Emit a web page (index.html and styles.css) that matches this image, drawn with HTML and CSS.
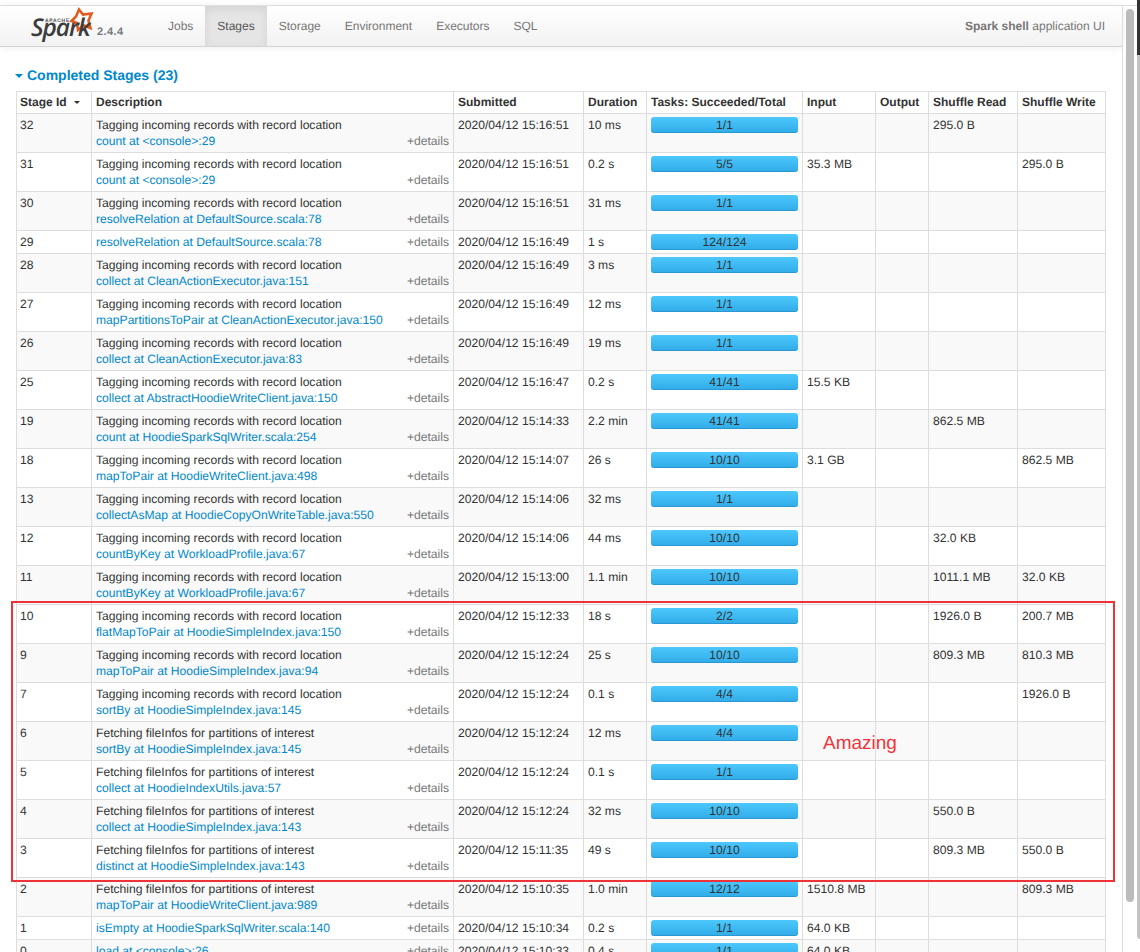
FILE: index.html
```html
<!DOCTYPE html>
<html lang="en">
<head>
<meta charset="utf-8">
<title>Spark shell - Stages</title>
<link rel="stylesheet" href="styles.css">
</head>
<body>
<div class="app">
  <div class="page">
    <nav class="navbar">
      <a class="brand" href="#">
        <svg class="logo" width="66" height="34" viewBox="0 0 66 34">
          <polygon class="logo-star" points="48,1.5 52,6.5 60.5,5.5 57.5,12.5 59.5,20 53,17.5 47,22 46,15 40.5,13 45,8.5"/>
          <text class="logo-apache" x="14" y="14">APACHE</text>
          <text class="logo-word" x="0" y="27.5">Spark</text>
        </svg>
        <span class="version">2.4.4</span>
      </a>
      <ul class="nav">
        <li><a href="#">Jobs</a></li>
        <li class="active"><a href="#">Stages</a></li>
        <li><a href="#">Storage</a></li>
        <li><a href="#">Environment</a></li>
        <li><a href="#">Executors</a></li>
        <li><a href="#">SQL</a></li>
      </ul>
      <p class="app-name"><strong>Spark shell</strong> application UI</p>
    </nav>
    <main class="content">
      <h4 class="section-title"><span class="caret"></span>Completed Stages (23)</h4>
      <table class="stages">
        <colgroup>
          <col class="c-id"><col class="c-desc"><col class="c-sub"><col class="c-dur"><col class="c-task"><col class="c-in"><col class="c-out"><col class="c-read"><col class="c-write">
        </colgroup>
        <thead>
          <tr><th>Stage Id<span class="sort"></span></th><th>Description</th><th>Submitted</th><th>Duration</th><th>Tasks: Succeeded/Total</th><th>Input</th><th>Output</th><th>Shuffle Read</th><th>Shuffle Write</th></tr>
        </thead>
        <tbody>
          <tr><td>32</td><td><div>Tagging incoming records with record location</div><div class="line"><a href="#">count at &lt;console&gt;:29</a><span class="more">+details</span></div></td><td>2020/04/12 15:16:51</td><td>10 ms</td><td><div class="bar">1/1</div></td><td></td><td></td><td>295.0 B</td><td></td></tr>
          <tr><td>31</td><td><div>Tagging incoming records with record location</div><div class="line"><a href="#">count at &lt;console&gt;:29</a><span class="more">+details</span></div></td><td>2020/04/12 15:16:51</td><td>0.2 s</td><td><div class="bar">5/5</div></td><td>35.3 MB</td><td></td><td></td><td>295.0 B</td></tr>
          <tr><td>30</td><td><div>Tagging incoming records with record location</div><div class="line"><a href="#">resolveRelation at DefaultSource.scala:78</a><span class="more">+details</span></div></td><td>2020/04/12 15:16:51</td><td>31 ms</td><td><div class="bar">1/1</div></td><td></td><td></td><td></td><td></td></tr>
          <tr><td>29</td><td><div class="line"><a href="#">resolveRelation at DefaultSource.scala:78</a><span class="more">+details</span></div></td><td>2020/04/12 15:16:49</td><td>1 s</td><td><div class="bar">124/124</div></td><td></td><td></td><td></td><td></td></tr>
          <tr><td>28</td><td><div>Tagging incoming records with record location</div><div class="line"><a href="#">collect at CleanActionExecutor.java:151</a><span class="more">+details</span></div></td><td>2020/04/12 15:16:49</td><td>3 ms</td><td><div class="bar">1/1</div></td><td></td><td></td><td></td><td></td></tr>
          <tr><td>27</td><td><div>Tagging incoming records with record location</div><div class="line"><a href="#">mapPartitionsToPair at CleanActionExecutor.java:150</a><span class="more">+details</span></div></td><td>2020/04/12 15:16:49</td><td>12 ms</td><td><div class="bar">1/1</div></td><td></td><td></td><td></td><td></td></tr>
          <tr><td>26</td><td><div>Tagging incoming records with record location</div><div class="line"><a href="#">collect at CleanActionExecutor.java:83</a><span class="more">+details</span></div></td><td>2020/04/12 15:16:49</td><td>19 ms</td><td><div class="bar">1/1</div></td><td></td><td></td><td></td><td></td></tr>
          <tr><td>25</td><td><div>Tagging incoming records with record location</div><div class="line"><a href="#">collect at AbstractHoodieWriteClient.java:150</a><span class="more">+details</span></div></td><td>2020/04/12 15:16:47</td><td>0.2 s</td><td><div class="bar">41/41</div></td><td>15.5 KB</td><td></td><td></td><td></td></tr>
          <tr><td>19</td><td><div>Tagging incoming records with record location</div><div class="line"><a href="#">count at HoodieSparkSqlWriter.scala:254</a><span class="more">+details</span></div></td><td>2020/04/12 15:14:33</td><td>2.2 min</td><td><div class="bar">41/41</div></td><td></td><td></td><td>862.5 MB</td><td></td></tr>
          <tr><td>18</td><td><div>Tagging incoming records with record location</div><div class="line"><a href="#">mapToPair at HoodieWriteClient.java:498</a><span class="more">+details</span></div></td><td>2020/04/12 15:14:07</td><td>26 s</td><td><div class="bar">10/10</div></td><td>3.1 GB</td><td></td><td></td><td>862.5 MB</td></tr>
          <tr><td>13</td><td><div>Tagging incoming records with record location</div><div class="line"><a href="#">collectAsMap at HoodieCopyOnWriteTable.java:550</a><span class="more">+details</span></div></td><td>2020/04/12 15:14:06</td><td>32 ms</td><td><div class="bar">1/1</div></td><td></td><td></td><td></td><td></td></tr>
          <tr><td>12</td><td><div>Tagging incoming records with record location</div><div class="line"><a href="#">countByKey at WorkloadProfile.java:67</a><span class="more">+details</span></div></td><td>2020/04/12 15:14:06</td><td>44 ms</td><td><div class="bar">10/10</div></td><td></td><td></td><td>32.0 KB</td><td></td></tr>
          <tr><td>11</td><td><div>Tagging incoming records with record location</div><div class="line"><a href="#">countByKey at WorkloadProfile.java:67</a><span class="more">+details</span></div></td><td>2020/04/12 15:13:00</td><td>1.1 min</td><td><div class="bar">10/10</div></td><td></td><td></td><td>1011.1 MB</td><td>32.0 KB</td></tr>
          <tr><td>10</td><td><div>Tagging incoming records with record location</div><div class="line"><a href="#">flatMapToPair at HoodieSimpleIndex.java:150</a><span class="more">+details</span></div></td><td>2020/04/12 15:12:33</td><td>18 s</td><td><div class="bar">2/2</div></td><td></td><td></td><td>1926.0 B</td><td>200.7 MB</td></tr>
          <tr><td>9</td><td><div>Tagging incoming records with record location</div><div class="line"><a href="#">mapToPair at HoodieSimpleIndex.java:94</a><span class="more">+details</span></div></td><td>2020/04/12 15:12:24</td><td>25 s</td><td><div class="bar">10/10</div></td><td></td><td></td><td>809.3 MB</td><td>810.3 MB</td></tr>
          <tr><td>7</td><td><div>Tagging incoming records with record location</div><div class="line"><a href="#">sortBy at HoodieSimpleIndex.java:145</a><span class="more">+details</span></div></td><td>2020/04/12 15:12:24</td><td>0.1 s</td><td><div class="bar">4/4</div></td><td></td><td></td><td></td><td>1926.0 B</td></tr>
          <tr><td>6</td><td><div>Fetching fileInfos for partitions of interest</div><div class="line"><a href="#">sortBy at HoodieSimpleIndex.java:145</a><span class="more">+details</span></div></td><td>2020/04/12 15:12:24</td><td>12 ms</td><td><div class="bar">4/4</div></td><td></td><td></td><td></td><td></td></tr>
          <tr><td>5</td><td><div>Fetching fileInfos for partitions of interest</div><div class="line"><a href="#">collect at HoodieIndexUtils.java:57</a><span class="more">+details</span></div></td><td>2020/04/12 15:12:24</td><td>0.1 s</td><td><div class="bar">1/1</div></td><td></td><td></td><td></td><td></td></tr>
          <tr><td>4</td><td><div>Fetching fileInfos for partitions of interest</div><div class="line"><a href="#">collect at HoodieSimpleIndex.java:143</a><span class="more">+details</span></div></td><td>2020/04/12 15:12:24</td><td>32 ms</td><td><div class="bar">10/10</div></td><td></td><td></td><td>550.0 B</td><td></td></tr>
          <tr><td>3</td><td><div>Fetching fileInfos for partitions of interest</div><div class="line"><a href="#">distinct at HoodieSimpleIndex.java:143</a><span class="more">+details</span></div></td><td>2020/04/12 15:11:35</td><td>49 s</td><td><div class="bar">10/10</div></td><td></td><td></td><td>809.3 MB</td><td>550.0 B</td></tr>
          <tr><td>2</td><td><div>Fetching fileInfos for partitions of interest</div><div class="line"><a href="#">mapToPair at HoodieWriteClient.java:989</a><span class="more">+details</span></div></td><td>2020/04/12 15:10:35</td><td>1.0 min</td><td><div class="bar">12/12</div></td><td>1510.8 MB</td><td></td><td></td><td>809.3 MB</td></tr>
          <tr><td>1</td><td><div class="line"><a href="#">isEmpty at HoodieSparkSqlWriter.scala:140</a><span class="more">+details</span></div></td><td>2020/04/12 15:10:34</td><td>0.2 s</td><td><div class="bar">1/1</div></td><td>64.0 KB</td><td></td><td></td><td></td></tr>
          <tr><td>0</td><td><div class="line"><a href="#">load at &lt;console&gt;:26</a><span class="more">+details</span></div></td><td>2020/04/12 15:10:33</td><td>0.4 s</td><td><div class="bar">1/1</div></td><td>64.0 KB</td><td></td><td></td><td></td></tr>
        </tbody>
      </table>
    </main>
  </div>
  <div class="rail"><div class="thumb"></div></div>
  <div class="edge"></div>
  <div class="highlight"></div>
  <div class="note">Amazing</div>
</div>
</body>
</html>
```
FILE: styles.css
```css
html, body {
  margin: 0;
  height: 952px;
  overflow: hidden;
  background: #fff;
}
body {
  font-family: "Liberation Sans", Arial, sans-serif;
  font-size: 12px;
  line-height: 16px;
  color: #333;
  text-rendering: geometricPrecision;
}
a { color: #0088cc; text-decoration: none; }

.app {
  position: relative;
  display: flex;
  height: 952px;
  overflow: hidden;
}
.page {
  flex: 0 0 1122px;
  min-width: 0;
  padding-top: 5px;
  box-sizing: border-box;
}

.navbar {
  display: flex;
  align-items: stretch;
  height: 42px;
  box-sizing: border-box;
  padding: 0 17px 0 31px;
  border-top: 1px solid #dedede;
  border-bottom: 1px solid #d4d4d4;
  background: linear-gradient(#ffffff, #f2f2f2);
  box-shadow: 0 1px 8px rgba(0, 0, 0, .07);
}
.brand { display: flex; align-items: flex-start; width: 125px; flex: none; }
.logo { display: block; margin-top: 2px; flex: none; overflow: visible; }
.logo-star { fill: none; stroke: #e25a1c; stroke-width: 2.6; stroke-linejoin: miter; }
.logo-apache { font: bold 5px "Liberation Sans", Arial, sans-serif; letter-spacing: .7px; fill: #555; }
.logo-word { font: italic 600 24.5px "Open Sans", sans-serif; letter-spacing: -1.1px; fill: #3d3d3d; }
.version {
  margin: 18px 0 0 0;
  font-size: 11px;
  font-weight: bold;
  letter-spacing: .4px;
  color: #737b83;
}
.nav { display: flex; margin: 0; padding: 0; list-style: none; }
.nav a {
  display: block;
  padding: 12px 12px 0;
  height: 28px;
  color: #777;
}
.nav .active a {
  color: #555;
  background: #e5e5e5;
  box-shadow: inset 0 3px 8px rgba(0, 0, 0, .08);
}
.app-name { margin: 12px 0 0 auto; color: #777; }
.app-name strong { font-weight: bold; }

.content { padding: 0 16px; }
.section-title {
  display: flex;
  align-items: center;
  margin: 18px 0 6px;
  height: 20px;
  font-size: 14px;
  line-height: 20px;
  font-weight: bold;
  color: #0088cc;
}
.caret {
  flex: none;
  width: 0;
  height: 0;
  margin: 1px 4px 0 -1px;
  border-left: 4px solid transparent;
  border-right: 4px solid transparent;
  border-top: 4px solid #0088cc;
}

.stages {
  width: 1090px;
  table-layout: fixed;
  border-collapse: collapse;
  border: 1px solid #ddd;
  font-size: 12.12px;
}
.c-id { width: 75px; }
.c-desc { width: 362px; }
.c-sub { width: 130px; }
.c-dur { width: 63px; }
.c-task { width: 156px; }
.c-in { width: 73px; }
.c-out { width: 53px; }
.c-read { width: 89px; }
.c-write { width: 88px; }
.stages th, .stages td {
  padding: 3px 4px;
  border: 1px solid #ddd;
  text-align: left;
  vertical-align: top;
  white-space: nowrap;
  overflow: hidden;
}
.stages th:first-child, .stages td:first-child { padding-left: 3px; }
.stages th { font-weight: bold; font-size: 12px; padding-top: 2px; padding-bottom: 3px; }
.stages tbody tr:nth-child(odd) td { background: #f9f9f9; }
.sort {
  display: inline-block;
  width: 0;
  height: 0;
  margin-left: 7px;
  vertical-align: 2px;
  border-left: 3.5px solid transparent;
  border-right: 3.5px solid transparent;
  border-top: 3.5px solid #333;
}
.line { display: flex; justify-content: space-between; }
.more { color: #777; }
.bar {
  height: 16px;
  box-sizing: border-box;
  text-align: center;
  line-height: 16px;
  border-radius: 3px;
  border-bottom: 1px solid #2a97d0;
  background: linear-gradient(#4cc8fd, #32ade9);
  color: #333;
}

.rail {
  position: relative;
  flex: 1;
  margin-top: 5px;
  border-top: 1px solid #dedede;
  border-left: 1px solid #ddd;
}
.thumb {
  position: absolute;
  left: 3px;
  top: 3px;
  width: 8px;
  height: 893px;
  border-radius: 4px;
  background: #bbb;
}
.edge {
  position: absolute;
  right: 0;
  top: 0;
  width: 3px;
  height: 939px;
  border-bottom-left-radius: 3px;
  background: linear-gradient(#333 0, #333 55px, #c4c4c4 55px);
}

.highlight {
  position: absolute;
  left: 11px;
  top: 601px;
  width: 1104px;
  height: 281px;
  box-sizing: border-box;
  border: 2px solid #ee3338;
  pointer-events: none;
}
.note {
  position: absolute;
  left: 823px;
  top: 733px;
  font-size: 19px;
  line-height: 22px;
  color: #f0343a;
}
```
